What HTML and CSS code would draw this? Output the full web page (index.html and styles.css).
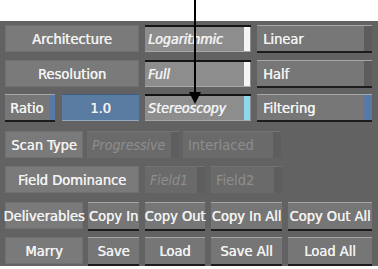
FILE: index.html
```html
<!DOCTYPE html>
<html>
<head>
<meta charset="utf-8">
<link rel="stylesheet" href="styles.css">
</head>
<body>
<div class="top"></div>
<div class="panel">
  <div class="row">
    <div class="lbl w134">Architecture</div>
    <div class="opt w106"><span class="txt">Logarithmic</span><span class="strip white"></span></div>
    <div class="btn w115"><span class="txt">Linear</span><span class="strip dark"></span></div>
  </div>
  <div class="row">
    <div class="lbl w134">Resolution</div>
    <div class="opt w106"><span class="txt">Full</span><span class="strip white"></span></div>
    <div class="btn w115"><span class="txt">Half</span><span class="strip dark"></span></div>
  </div>
  <div class="row r3">
    <div class="btn w50 ratio"><span class="txt">Ratio</span><span class="strip blue"></span></div>
    <div class="field w77">1.0</div>
    <div class="opt w106"><span class="txt">Stereoscopy</span><span class="strip cyan"></span></div>
    <div class="btn w115"><span class="txt">Filtering</span><span class="strip blue"></span></div>
  </div>
  <div class="row r4 g-sm">
    <div class="lbl w78">Scan Type</div>
    <div class="dis w92 it"><span class="txt">Progressive</span><span class="strip"></span></div>
    <div class="dis w98"><span class="txt">Interlaced</span><span class="strip"></span></div>
  </div>
  <div class="row">
    <div class="lbl w134">Field Dominance</div>
    <div class="dis w60 it"><span class="txt">Field1</span><span class="strip"></span></div>
    <div class="dis w71"><span class="txt">Field2</span><span class="strip"></span></div>
  </div>
  <div class="row r6">
    <div class="lbl w78">Deliverables</div>
    <div class="act w51">Copy In</div>
    <div class="act w60">Copy Out</div>
    <div class="act w71">Copy In All</div>
    <div class="act w84">Copy Out All</div>
  </div>
  <div class="row">
    <div class="lbl w78">Marry</div>
    <div class="act w51">Save</div>
    <div class="act w60">Load</div>
    <div class="act w71">Save All</div>
    <div class="act w84">Load All</div>
  </div>
</div>
<div class="arrow">
  <div class="arrow-line"></div>
  <div class="arrow-head"></div>
</div>
</body>
</html>
```
FILE: styles.css
```css
html, body {
  margin: 0;
  padding: 0;
  background: #ffffff;
}
body {
  width: 378px;
  height: 269px;
  overflow: hidden;
  position: relative;
  font-family: "DejaVu Sans Condensed", "DejaVu Sans", sans-serif;
  font-weight: normal;
  font-size: 14.5px;
  color: #f2f2f2;
}
.top {
  height: 21px;
}
.panel {
  height: 245px;
  box-sizing: border-box;
  background: #626262;
  padding: 4px 0 0 5px;
  display: flex;
  flex-direction: column;
  gap: 8px;
}
.row {
  display: flex;
  height: 27px;
  gap: 6px;
}
.row.r3 { margin-top: -1px; }
.row.r4 { margin-top: 2px; }
.row.r6 { margin-top: 1px; }
.g-sm { gap: 5px; }

.w134 { width: 134px; }
.w106 { width: 106px; }
.w115 { width: 115px; }
.w50 { width: 50px; }
.w77 { width: 77px; margin-left: 1px; }
.w78 { width: 78px; margin-right: -1px; }
.w92 { width: 92px; }
.w98 { width: 98px; margin-left: -1px; }
.w60 { width: 60px; }
.w71 { width: 71px; }
.w51 { width: 51px; }
.w84 { width: 84px; }

.lbl, .opt, .btn, .field, .dis, .act {
  box-sizing: border-box;
  height: 27px;
  display: flex;
  align-items: center;
  white-space: nowrap;
  text-shadow: 0.4px 0 0 currentColor;
}
.txt {
  flex: 1;
  padding-left: 5px;
  overflow: hidden;
}
.strip {
  align-self: stretch;
  width: 8px;
}

.lbl {
  justify-content: center;
  background: #7a7a7a;
  border: 1px solid #707070;
}

.opt {
  background: #8d8d8d;
  border-top: 2px solid #141414;
  border-bottom: 1px solid #a8a8a8;
  font-style: italic;
  font-size: 14px;
  padding-right: 1px;
  text-shadow: 0.6px 0 0 currentColor;
}
.opt .txt { padding-left: 3px; }
.opt .strip { width: 6px; }
.strip.white { background: #f4f4f4; }
.strip.cyan { background: #8ad8ee; }
.strip.dark { background: #5c5c5c; }
.strip.blue { background: #5878a6; }

.btn {
  background: #777777;
  border-top: 1px solid #a6a6a6;
  box-shadow: 0 2px 0 #1c1c1c;
  height: 26px;
}
.btn .txt { padding-left: 6px; }
.ratio .txt { padding-left: 5px; }
.ratio .strip { width: 6px; }

.field {
  justify-content: center;
  background: #5a7ba2;
  border-top: 1px solid #3f5d80;
  border-bottom: 1px solid #92a6bd;
}

.dis {
  background: #6a6a6a;
  border-top: 1px solid #727272;
  color: #8e8e8e;
  text-shadow: none;
}
.dis .strip { width: 8px; background: #5e5e5e; }
.dis .txt { padding-left: 5px; }
.dis.it { font-style: italic; font-size: 14px; }

.act {
  justify-content: center;
  background: #767676;
  border-top: 1px solid #a4a4a4;
  box-shadow: 0 2px 0 #1c1c1c;
}

.arrow {
  position: absolute;
  left: 189px;
  top: 0;
  width: 14px;
  height: 104px;
}
.arrow-line {
  position: absolute;
  left: 5px;
  top: 0;
  width: 2px;
  height: 94px;
  background: #000000;
}
.arrow-head {
  position: absolute;
  left: 0;
  top: 92px;
  width: 0;
  height: 0;
  border-left: 6px solid transparent;
  border-right: 6px solid transparent;
  border-top: 12px solid #000000;
}
```
